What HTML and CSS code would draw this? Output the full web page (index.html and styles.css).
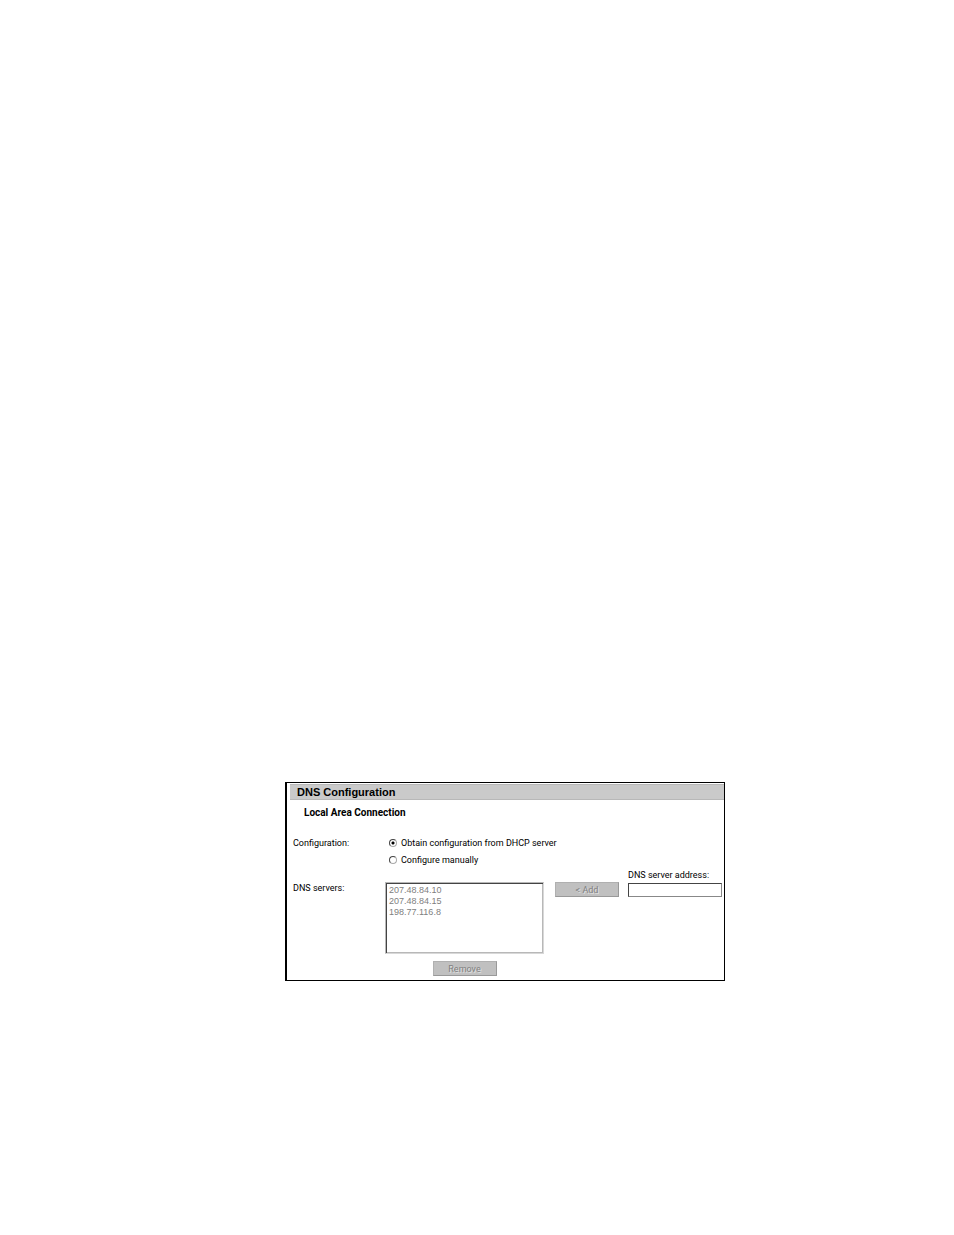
FILE: index.html
```html
<!DOCTYPE html>
<html lang="en">
<head>
    <meta charset="UTF-8">
    <meta name="viewport" content="width=device-width, initial-scale=1.0">
    <title>DNS Configuration</title>
    <link rel="stylesheet" href="styles.css">
</head>
<body>
    <form class="panel">
        <h1 class="panel-title">DNS Configuration</h1>
        <h2 class="connection">Local Area Connection</h2>

        <!-- Configuration mode -->
        <div class="row" role="radiogroup" aria-labelledby="modeLabel">
            <span class="row-label" id="modeLabel">Configuration:</span>
            <div class="options">
                <label class="option"><input type="radio" name="mode" value="dhcp" checked>Obtain configuration from DHCP server</label>
                <label class="option"><input type="radio" name="mode" value="manual">Configure manually</label>
            </div>
        </div>

        <!-- DNS server list -->
        <div class="row servers">
            <label class="row-label" for="servers">DNS servers:</label>
            <div class="list">
                <select id="servers" size="5" disabled>
                    <option>207.48.84.10</option>
                    <option>207.48.84.15</option>
                    <option>198.77.116.8</option>
                </select>
                <button type="button" class="button" disabled>Remove</button>
            </div>
            <button type="button" class="button" disabled>&lt; Add</button>
            <div class="address">
                <label for="address">DNS server address:</label>
                <input type="text" id="address">
            </div>
        </div>
    </form>
</body>
</html>
```

FILE: styles.css
```css
* {
    box-sizing: border-box;
}
body {
    margin: 0;
    padding: 782px 229px 40px 285px;
    background-color: white;
    color: black;
    font-family: Roboto, sans-serif;
    font-size: 9px;
    line-height: 12px;
}
.panel {
    border: 1px solid black;
    border-left-width: 2px;
    padding: 1px 0 4px 3px;
}
.panel-title {
    margin: 0;
    padding-left: 7px;
    background-color: #cacaca;
    border-top: 1px solid #b8b8b8;
    border-bottom: 1px solid #b8b8b8;
    font-family: "Liberation Sans", sans-serif;
    font-size: 11px;
    line-height: 14px;
}
.connection {
    margin: 7px 0 18px 14px;
    font-size: 10px;
    line-height: 12px;
}
.row {
    display: flex;
    padding: 0 2px 0 3px;
}
.row-label {
    width: 92px;
}
.options {
    display: flex;
    flex-direction: column;
    gap: 5px;
}
.option {
    display: flex;
    align-items: center;
    gap: 4px;
    padding-left: 4px;
}
.option input {
    appearance: none;
    width: 8px;
    height: 8px;
    margin: 0;
    border: 1px solid #444;
    border-right-color: #aaa;
    border-bottom-color: #aaa;
    border-radius: 50%;
}
.option input:checked {
    background: radial-gradient(circle, black 1px, white 2px);
}
.servers {
    margin-top: 3px;
}
.servers > .row-label {
    padding-top: 13px;
}
.list {
    display: flex;
    flex-direction: column;
    align-items: center;
    gap: 7px;
    width: 159px;
    padding-top: 13px;
}
.list select {
    width: 100%;
    height: 72px;
    padding: 2px 0 0 1px;
    border: 1px solid #b8b8b8;
    border-right-color: #d8d8d8;
    border-bottom-color: #d8d8d8;
    border-radius: 0;
    box-shadow: inset 1px 1px #444, inset -1px -1px #b8b8b8;
    background-color: white;
    font-family: "Liberation Sans", sans-serif;
    font-size: 9px;
    opacity: 1;
    overflow: hidden;
}
.list option {
    min-height: 11px;
    padding: 0 2px;
    color: #808080;
    line-height: 11px;
}
.button {
    width: 64px;
    height: 15px;
    padding: 0;
    background-color: #c0c0c0;
    border: 1px solid #b0b0b0;
    border-right-color: #999;
    border-bottom-color: #999;
    color: #808080;
    font-family: inherit;
    font-size: 9px;
    line-height: 12px;
    text-shadow: 1px 1px #e0e0e0;
}
.servers > .button {
    margin: 13px 9px 0 11px;
}
.address {
    flex: 1;
    display: flex;
    flex-direction: column;
    gap: 2px;
}
.address input {
    width: 100%;
    height: 14px;
    padding: 0 2px;
    border: 1px solid #444;
    border-right-color: #888;
    border-bottom-color: #888;
    font-family: inherit;
    font-size: 9px;
}
```
